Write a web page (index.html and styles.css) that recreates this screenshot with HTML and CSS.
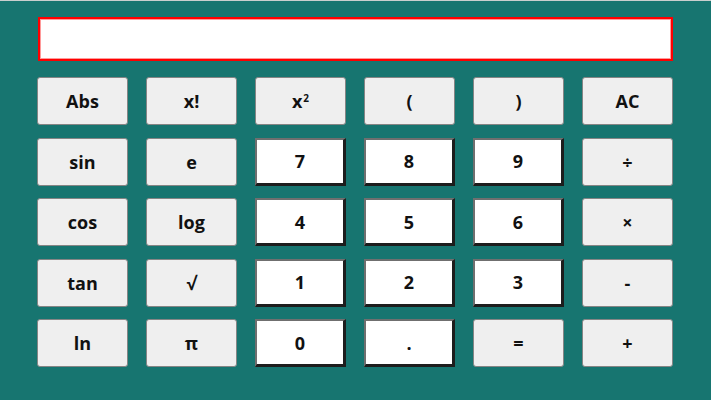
FILE: index.html
```html
<!DOCTYPE html>
<html>
<head>
<meta charset="utf-8">
<link rel="stylesheet" href="styles.css">
</head>
<body>
<div class="calc">
  <div class="display"></div>
  <div class="keys">
    <button class="key">Abs</button>
    <button class="key">x!</button>
    <button class="key">x<sup>2</sup></button>
    <button class="key">(</button>
    <button class="key">)</button>
    <button class="key">AC</button>

    <button class="key">sin</button>
    <button class="key">e</button>
    <button class="key num">7</button>
    <button class="key num">8</button>
    <button class="key num">9</button>
    <button class="key">÷</button>

    <button class="key">cos</button>
    <button class="key">log</button>
    <button class="key num">4</button>
    <button class="key num">5</button>
    <button class="key num">6</button>
    <button class="key">×</button>

    <button class="key">tan</button>
    <button class="key">√</button>
    <button class="key num">1</button>
    <button class="key num">2</button>
    <button class="key num">3</button>
    <button class="key">-</button>

    <button class="key">ln</button>
    <button class="key">π</button>
    <button class="key num">0</button>
    <button class="key num">.</button>
    <button class="key">=</button>
    <button class="key">+</button>
  </div>
</div>
</body>
</html>
```
FILE: styles.css
```css
html, body {
  margin: 0;
  padding: 0;
  height: 100%;
}
body {
  background: #177570;
  border-top: 1px solid #c9cfce;
  box-sizing: border-box;
  font-family: "Open Sans", "DejaVu Sans", sans-serif;
}
.calc {
  padding: 16px 0 0 37px;
}
.display {
  margin-left: 1px;
  width: 631px;
  height: 40px;
  background: #fff;
  border: 2px solid #ff0000;
  box-shadow: inset 0 0 0 1px #ff9a9a;
}
.keys {
  margin-top: 16px;
  display: grid;
  grid-template-columns: repeat(6, 91px);
  grid-auto-rows: 48px;
  column-gap: 18px;
  row-gap: 12.5px;
}
.key {
  box-sizing: border-box;
  margin: 0;
  padding: 0;
  background: #efefef;
  border: 1px solid #858585;
  border-radius: 3px;
  font-family: inherit;
  font-size: 18px;
  font-weight: 700;
  color: #111;
  display: flex;
  align-items: center;
  justify-content: center;
}
.key sup {
  font-size: 10px;
  line-height: 0;
  position: relative;
  top: -3px;
  margin-left: 1px;
}
.num {
  background: #fff;
  border-radius: 0;
  border-style: solid;
  border-width: 2px 3px 3px 2px;
  border-color: #6f6f6f #1d1d1d #1d1d1d #6f6f6f;
}
```
